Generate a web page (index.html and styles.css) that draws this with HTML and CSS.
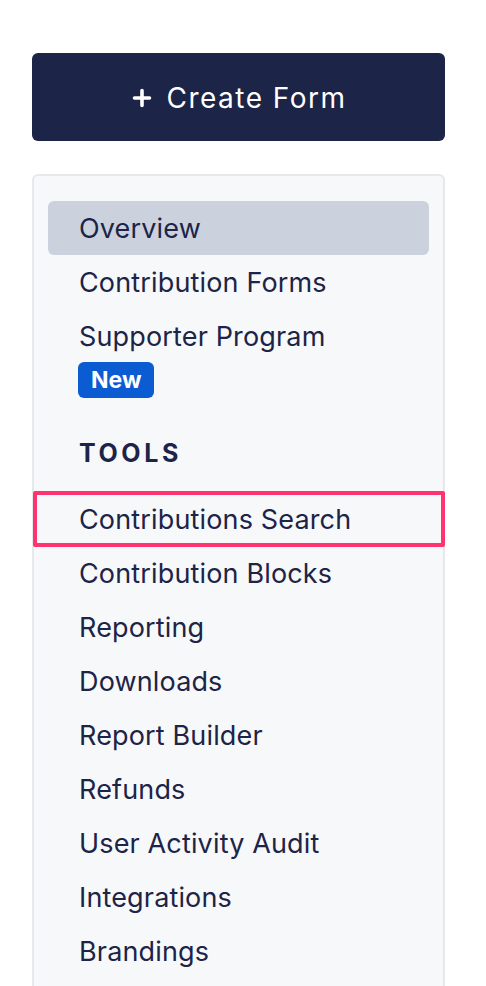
FILE: index.html
```
<!DOCTYPE html>
<html>
<head>
<meta charset="utf-8">
<link rel="stylesheet" href="styles.css">
</head>
<body>
<div class="wrap">
  <button class="create"><svg class="plus" width="20" height="20" viewBox="0 0 20 20"><path d="M10 2.5V17.5M2.5 10H17.5" stroke="#ffffff" stroke-width="3.6" stroke-linecap="round"/></svg><span>Create Form</span></button>
  <nav class="panel">
    <a class="item active">Overview</a>
    <a class="item">Contribution Forms</a>
    <a class="item">Supporter Program<span class="badge">New</span></a>
    <div class="heading">TOOLS</div>
    <div class="marked">
      <a class="item">Contributions Search</a>
      <span class="mark"></span>
    </div>
    <a class="item">Contribution Blocks</a>
    <a class="item">Reporting</a>
    <a class="item">Downloads</a>
    <a class="item">Report Builder</a>
    <a class="item">Refunds</a>
    <a class="item">User Activity Audit</a>
    <a class="item">Integrations</a>
    <a class="item">Brandings</a>
  </nav>
</div>
</body>
</html>
```
FILE: styles.css
```
html, body {
  margin: 0;
  padding: 0;
  background: #ffffff;
  font-family: Inter, "Noto Sans", sans-serif;
  color: #1c2447;
  overflow: hidden;
}
.wrap {
  padding: 53px 41px 0 32px;
}
.create {
  display: flex;
  align-items: center;
  justify-content: center;
  gap: 14px;
  width: 100%;
  height: 88px;
  border: none;
  border-radius: 6px;
  background: #1c2447;
  color: #ffffff;
  font-family: Inter, "Noto Sans", sans-serif;
  font-size: 28px;
  font-weight: 400;
  letter-spacing: 1.5px;
  padding: 2px 0 0 2px;
}
.plus {
  flex: none;
}
.panel {
  margin-top: 33px;
  background: #f7f8fa;
  border: 2px solid #e6e8ec;
  border-bottom: none;
  border-radius: 6px 6px 0 0;
  padding: 25px 14px 40px 14px;
  display: flex;
  flex-direction: column;
}
.item {
  display: block;
  padding: 10px 31px 8px;
  font-size: 27px;
  line-height: 36px;
  letter-spacing: 0.15px;
  border-radius: 6px;
  color: #1c2447;
}
.item.active {
  background: #cbd2de;
}
.badge {
  display: block;
  width: fit-content;
  margin-top: 7px;
  margin-bottom: 1px;
  margin-left: -1px;
  background: #0b5bd3;
  color: #ffffff;
  font-size: 23px;
  font-weight: 700;
  line-height: 36px;
  letter-spacing: 0;
  padding: 0 13px;
  border-radius: 6px;
}
.heading {
  margin: 28px 31px 21px;
  font-size: 25px;
  line-height: 36px;
  font-weight: 700;
  letter-spacing: 3.6px;
}
.marked {
  position: relative;
}
.mark {
  position: absolute;
  left: -15px;
  right: -16px;
  top: -1px;
  bottom: -1px;
  border: 4px solid #ff3370;
  border-radius: 2px;
}
```
